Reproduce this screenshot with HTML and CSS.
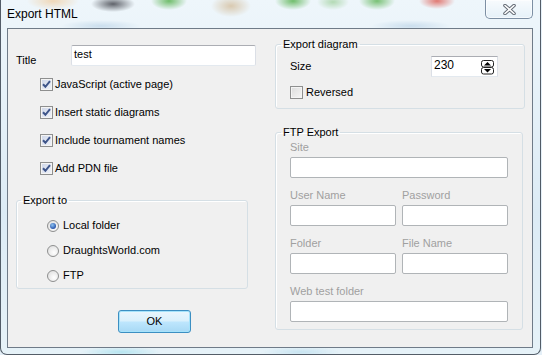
FILE: index.html
```html
<!DOCTYPE html>
<html lang="en">
  <head>
    <meta charset="UTF-8" />
    <meta name="viewport" content="width=device-width, initial-scale=1.0" />
    <title>Export HTML</title>
    <link rel="stylesheet" href="styles.css">
  </head>
  <body>
    <div class="window">
      <header class="titlebar">
        <span class="caption">Export HTML</span>
        <button class="close" title="Close">
          <svg width="13" height="11" viewBox="0 0 13 11">
            <path d="M2 1.5 L11 9.5 M11 1.5 L2 9.5" stroke="#646b75" stroke-width="3.6" stroke-linecap="round" />
            <path d="M2 1.5 L11 9.5 M11 1.5 L2 9.5" stroke="#fff" stroke-width="1.6" stroke-linecap="round" />
          </svg>
        </button>
      </header>

      <main class="client">
        <section class="col col-left">
          <div class="title-row">
            <label for="title">Title</label>
            <div class="text" id="title">test</div>
          </div>

          <ul class="checks">
            <li class="check">
              <span class="box checked">
                <svg width="9" height="9" viewBox="0 0 9 9"><path d="M1 4.2 L3.4 6.8 L8 1.2" fill="none" stroke="#3e558a" stroke-width="2" /></svg>
              </span>
              JavaScript (active page)
            </li>
            <li class="check">
              <span class="box checked">
                <svg width="9" height="9" viewBox="0 0 9 9"><path d="M1 4.2 L3.4 6.8 L8 1.2" fill="none" stroke="#3e558a" stroke-width="2" /></svg>
              </span>
              Insert static diagrams
            </li>
            <li class="check">
              <span class="box checked">
                <svg width="9" height="9" viewBox="0 0 9 9"><path d="M1 4.2 L3.4 6.8 L8 1.2" fill="none" stroke="#3e558a" stroke-width="2" /></svg>
              </span>
              Include tournament names
            </li>
            <li class="check">
              <span class="box checked">
                <svg width="9" height="9" viewBox="0 0 9 9"><path d="M1 4.2 L3.4 6.8 L8 1.2" fill="none" stroke="#3e558a" stroke-width="2" /></svg>
              </span>
              Add PDN file
            </li>
          </ul>

          <fieldset class="group export-to">
            <legend>Export to</legend>
            <div class="group-body">
              <div class="radio on"><span class="dot"></span>Local folder</div>
              <div class="radio"><span class="dot"></span>DraughtsWorld.com</div>
              <div class="radio"><span class="dot"></span>FTP</div>
            </div>
          </fieldset>

          <div class="actions">
            <button class="ok">OK</button>
          </div>
        </section>

        <section class="col col-right">
          <fieldset class="group diagram">
            <legend>Export diagram</legend>
            <div class="group-body">
              <div class="size-row">
                <span class="size-label">Size</span>
                <div class="spin">
                  <span>230</span>
                  <svg width="13" height="15" viewBox="0 0 13 15">
                    <rect x="0.5" y="0.5" width="12" height="6.5" rx="2" fill="#fff" stroke="#222" />
                    <rect x="0.5" y="7.5" width="12" height="6.5" rx="2" fill="#fff" stroke="#222" />
                    <path d="M3 5.5 L6.5 2 L10 5.5 Z" fill="#000" />
                    <path d="M3 9 L10 9 L6.5 12.5 Z" fill="#000" />
                  </svg>
                </div>
              </div>
              <div class="check reversed"><span class="box"></span>Reversed</div>
            </div>
          </fieldset>

          <fieldset class="group ftp">
            <legend>FTP Export</legend>
            <div class="group-body">
              <div class="field">
                <span class="lbl">Site</span>
                <div class="text off"></div>
              </div>
              <div class="pair">
                <div class="field">
                  <span class="lbl">User Name</span>
                  <div class="text off"></div>
                </div>
                <div class="field">
                  <span class="lbl">Password</span>
                  <div class="text off"></div>
                </div>
              </div>
              <div class="pair">
                <div class="field">
                  <span class="lbl">Folder</span>
                  <div class="text off"></div>
                </div>
                <div class="field">
                  <span class="lbl">File Name</span>
                  <div class="text off"></div>
                </div>
              </div>
              <div class="field">
                <span class="lbl">Web test folder</span>
                <div class="text off"></div>
              </div>
            </div>
          </fieldset>
        </section>
      </main>
    </div>
  </body>
</html>
```

FILE: styles.css
```css
* {
  box-sizing: border-box;
}

html,
body {
  margin: 0;
  padding: 0;
}

body {
  width: 542px;
  height: 355px;
  overflow: hidden;
  background: #e4eff7;
  font-family: "Liberation Sans", Arial, sans-serif;
  font-size: 11px;
  line-height: 13px;
  color: #000;
}

/* glass frame */
.window {
  width: 541px;
  height: 355px;
  border: 1px solid rgba(45, 55, 68, 0.8);
  border-top: 0;
  border-radius: 0 0 7px 7px;
  background:
    radial-gradient(ellipse 40px 5px at 120px 352px, rgba(150, 220, 235, 0.6), transparent),
    radial-gradient(ellipse 40px 5px at 300px 352px, rgba(170, 215, 235, 0.5), transparent),
    linear-gradient(#eef6fb, #dcebf5 60%, #e6f2f8);
}

.titlebar {
  height: 28px;
  display: flex;
  align-items: flex-start;
  padding-left: 6px;
  background:
    radial-gradient(ellipse 26px 9px at 52px 1px, rgba(240, 196, 140, 0.6), transparent),
    radial-gradient(ellipse 22px 8px at 112px 4px, rgba(60, 62, 70, 0.8), transparent),
    radial-gradient(ellipse 18px 9px at 168px 1px, rgba(70, 170, 60, 0.75), transparent),
    radial-gradient(ellipse 20px 11px at 230px 6px, rgba(200, 165, 115, 0.55), transparent),
    radial-gradient(ellipse 18px 9px at 292px 1px, rgba(70, 170, 60, 0.75), transparent),
    radial-gradient(ellipse 16px 8px at 332px 2px, rgba(120, 190, 110, 0.5), transparent),
    radial-gradient(ellipse 18px 9px at 376px 1px, rgba(70, 170, 60, 0.7), transparent),
    radial-gradient(ellipse 18px 8px at 436px 1px, rgba(220, 80, 70, 0.75), transparent),
    radial-gradient(ellipse 40px 6px at 100px 26px, rgba(170, 200, 225, 0.5), transparent),
    radial-gradient(ellipse 40px 6px at 410px 26px, rgba(170, 200, 225, 0.5), transparent);
}

.caption {
  margin-top: 8px;
  font-size: 12px;
  line-height: 12px;
}

.close {
  margin-left: auto;
  margin-right: 7px;
  width: 48px;
  height: 19px;
  padding: 0;
  display: flex;
  align-items: center;
  justify-content: center;
  border: 1px solid #7d8fa3;
  border-top: 0;
  border-radius: 0 0 5px 5px;
  background: linear-gradient(rgba(255, 255, 255, 0.55), rgba(225, 238, 247, 0.6));
  box-shadow: inset 0 0 0 1px rgba(255, 255, 255, 0.6);
}

/* client area */
.client {
  margin-left: 6px;
  width: 526px;
  height: 320px;
  border: 1px solid #6f7b88;
  background: #f0f0f0;
  display: grid;
  grid-template-columns: 260px 1fr;
}

.col-left {
  padding-left: 8px;
}

.title-row {
  margin-top: 16px;
  height: 21px;
  display: flex;
}

.title-row label {
  width: 55px;
  align-self: flex-end;
  margin-bottom: -1px;
}

.text {
  height: 21px;
  padding: 2px 0 0 2px;
  background: #fff;
  border: 1px solid #dbdfe6;
  border-top-color: #abadb3;
  border-bottom-color: #e3e9ef;
  border-radius: 2px;
}

#title {
  width: 185px;
}

.text.off {
  border-color: #b0b4b7;
}

.checks {
  margin: 4px 0 0;
  padding: 0 0 0 24px;
  list-style: none;
}

.check {
  height: 28px;
  display: flex;
  align-items: center;
}

.box {
  width: 13px;
  height: 13px;
  margin-right: 2px;
  display: flex;
  align-items: center;
  justify-content: center;
  border: 1px solid #8e8f8f;
  background: linear-gradient(135deg, #dcdcdc, #f6f6f6);
  box-shadow: inset 0 0 0 1px #f4f4f4;
}

.box.checked {
  background: linear-gradient(135deg, #cdd5e8, #f1f4fa);
}

/* group boxes */
.group {
  margin: 0;
  padding: 0;
  border: 1px solid #d5dfe5;
  border-radius: 3px;
  box-shadow: inset 1px 1px 0 #fff;
}

.group legend {
  padding: 0 2px;
}

.export-to {
  margin-top: 12px;
  width: 232px;
}

.export-to legend {
  margin-left: 4px;
}

.export-to .group-body {
  padding: 6px 0 0 30px;
}

.radio {
  height: 25px;
  display: flex;
  align-items: center;
}

.dot {
  width: 12px;
  height: 12px;
  margin-right: 4px;
  border-radius: 50%;
  border: 1px solid #8e8f8f;
  background: radial-gradient(circle at 60% 65%, #fff, #dadada);
  display: flex;
  align-items: center;
  justify-content: center;
}

.radio.on .dot::after {
  content: "";
  width: 6px;
  height: 6px;
  border-radius: 50%;
  background: radial-gradient(circle at 40% 35%, #8fc4f2, #2a56ac 70%, #1c3a7c);
}

.actions {
  margin: 21px 0 0 102px;
}

.ok {
  width: 73px;
  height: 23px;
  padding: 0;
  font: inherit;
  color: #000;
  border: 1px solid #3c8fc2;
  border-radius: 3px;
  background: linear-gradient(#eaf6fd, #d9f0fc 48%, #bee6fd 52%, #a7d9f5);
  box-shadow: inset 0 0 0 1px #a6e3fb;
}

/* right column */
.col-right {
  padding: 9px 0 0 7px;
}

.diagram {
  width: 250px;
}

.diagram legend,
.ftp legend {
  margin-left: 5px;
}

.diagram .group-body {
  padding: 5px 0 9px 14px;
}

.size-row {
  height: 21px;
  display: flex;
  align-items: center;
}

.size-label {
  width: 141px;
}

.spin {
  width: 67px;
  height: 21px;
  padding: 1px 3px 0 2px;
  display: flex;
  align-items: flex-start;
  justify-content: space-between;
  background: #fff;
  border: 1px solid #dbdfe6;
  border-top-color: #abadb3;
  border-bottom-color: #e3e9ef;
  font-size: 12px;
  line-height: 14px;
}

.spin svg {
  margin-top: 2px;
}

.reversed {
  margin-top: 9px;
  height: 13px;
}

.reversed .box {
  margin-right: 3px;
}

.ftp {
  margin-top: 17px;
  width: 248px;
}

.ftp .group-body {
  padding: 2px 0 7px 14px;
}

.field {
  width: 218px;
}

.field + .field,
.field + .pair,
.pair + .pair,
.pair + .field {
  margin-top: 11px;
}

.lbl {
  display: block;
  margin-bottom: 3px;
  color: #a0a0a0;
}

.pair {
  display: flex;
  gap: 6px;
}

.pair .field {
  width: 106px;
}

.pair .field + .field {
  margin-top: 0;
}
```
